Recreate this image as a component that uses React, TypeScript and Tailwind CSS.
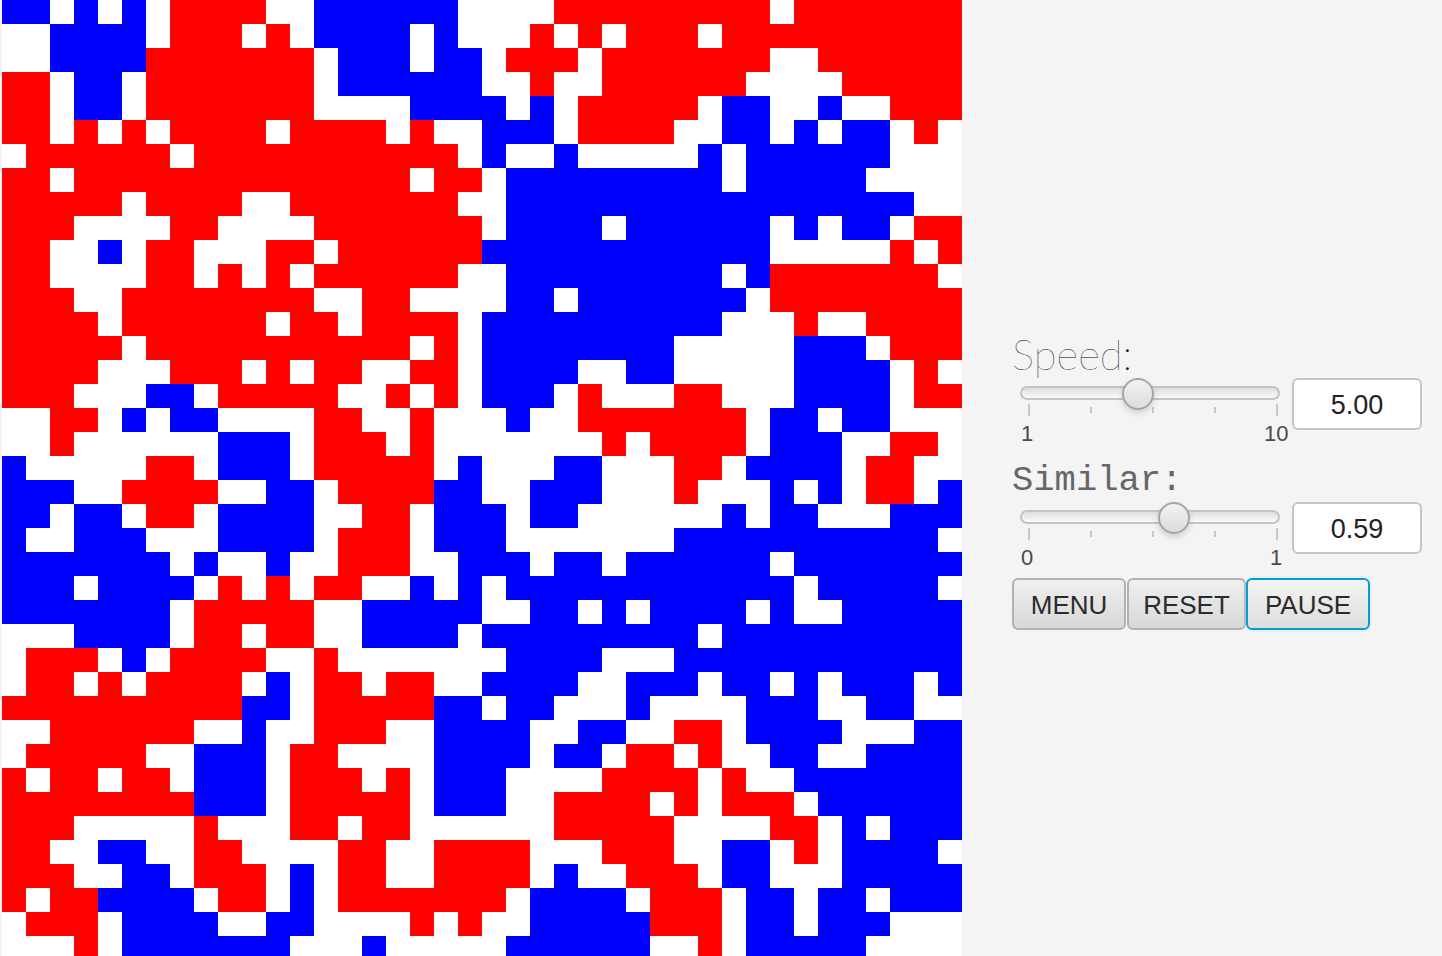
const ROWS = [
  "BB.B.B.RRRR..BBBBBB....RRRRRRRRR.RRRRRRR",
  "..BBBB.RRR.R.BBBB.B...R.R.RRR.RRRRRRRRRR",
  "..BBBBRRRRRRR.BBB.BB.RRR.RRRRRRR..RRRRRR",
  "RR.BB.RRRRRRR.BBBBBB..R..RRRRRR....RRRRR",
  "RR.BB.RRRRRRR....BBBB.B.RRRRR.BB..B..RRR",
  "RR.R.R.RRRR.RRRR.R..BBB.RRRR..BB.B.BB.R.",
  ".RRRRRR.RRRRRRRRRRR.B..B.....B.BBBBBB...",
  "RR.RRRRRRRRRRRRRR.RR.BBBBBBBBB.BBBBB....",
  "RRRRR.RRRR..RRRRRRR..BBBBBBBBBBBBBBBBB..",
  "RRR....RR....RRRRRRR.BBBB.BBBBBB.B.BB.RR",
  "RR..B.RR...RR.RRRRRRBBBBBBBBBBBB.....R.R",
  "RR....RR.R.R.RRRRRR..BBBBBBBBB.BRRRRRRR.",
  "RRR..RRRRRRRR..RR....BB.BBBBBBB.RRRRRRRR",
  "RRRR.RRRRRR.RR.RRRR.BBBBBBBBBB...R..RRRR",
  "RRRRR.RRRRRRRRRRR.R.BBBBBBBB.....BBB.RRR",
  "RRRR...RRR.R.RR..RR.BBBB..BB.....BBBB.R.",
  "RRR...BB.RRRRR..R.R.BBB.R...RR...BBBB.RR",
  "..RR.B.BB....RR..R...B..RRRRRRR.BB.BB...",
  "..R......BBB.RRR.R.......R.RRRR.BBB..RR.",
  "B.....RR.BBB.RRRRR.B...BB...RR.BBBB.RR..",
  "BBB..RRRR..BB.RRRRBB..BBB...R...B.B.RR.B",
  "BB.BB.RR.BBBB..RR.BBB.BB......B.BB...BBB",
  "B..BBB...BBBB.RRR.BBB.......BBBBBBBBBBB.",
  "BBBBBBB.B..B..RRR..BBB.BB.BBBBBB.BBBBBBB",
  "BBB.BBBB.R.R.RR..B.B.BBBBBBBBBBBB.BBBBB.",
  "BBBBBBB.RRRRR..BBBBB..BB.B.BBBB.B..BBBBB",
  "...BBBB.RR.RR..BBBB.BBBBBBBBB.BBBBBBBBBB",
  ".RRR.B.RRRR..R.......BBBB...BBBBBBBBBBBB",
  ".RR.R.RRRR.B.RR.RR..BBBB..BBB.BB.B.BBB.B",
  "RRRRRRRRRRBB.RRRRRBB.BB...B....BBB..BB..",
  "..RRRRRR..B..RRR..BBBB..BB..RR.BBBB...BB",
  ".RRRRR..BBB.RR....BBBB.BB.RR.R..BB..BBBB",
  "R.RR.RR.BBB.RRR.R.BBB....RRRR.R..BBBBBBB",
  "RRRRRRRRBBB.RRRRR.BBB..RRRR.R.RRR.BBBBBB",
  "RRR.....R...RR.RR......RRRRR....RR.B.BBB",
  "RR..BB..RR....RR..RRRR...RRR..BB.R.BBBB.",
  "RRR..BB.RRR.B.RR..RRRR.B..RRR.BB...BBBBB",
  "R.RRBBBB.RR.B.RRRRRRR.BBBB.RRR.BB.BB.BBB",
  ".RRR.BBBB..BB....R.R..BBBBBRRR.BB.BBB...",
  "...R.BBBBBBB...B.....BBBBBB..R.BBBBB....",
];

const CELL: Record<string, string> = {
  R: "bg-[#ff0000]",
  B: "bg-[#0000ff]",
  ".": "bg-white",
};

function Slider({ thumb, min, max }: { thumb: string; min: string; max: string }) {
  return (
    <div className="w-[280px] pt-2">
      <div className="relative ml-2 w-[260px]">
        <div className="h-[14px] rounded-full border-2 border-[#c4c4c4] bg-gradient-to-b from-[#dedede] to-[#fbfbfb]" />
        <div
          className={`absolute -top-2 h-8 w-8 rounded-full border-2 border-[#a6a6a6] bg-gradient-to-b from-[#f2f2f2] to-[#dcdcdc] shadow-[0_3px_6px_rgba(0,0,0,0.15)] ${thumb}`}
        />
      </div>
      <div className="mt-1 ml-2 flex h-3 w-[260px] items-center justify-between pr-[2px] pl-2">
        <span className="h-3 w-[2px] bg-[#c8c8c8]" />
        <span className="h-[6px] w-[2px] bg-[#c8c8c8]" />
        <span className="h-[6px] w-[2px] bg-[#c8c8c8]" />
        <span className="h-[6px] w-[2px] bg-[#c8c8c8]" />
        <span className="h-3 w-[2px] bg-[#c8c8c8]" />
      </div>
      <div className="mt-[7px] flex justify-between pr-1 pl-[3px] text-[22px] leading-[22px] text-[#4a4a4a]">
        <span className="w-6 text-center">{min}</span>
        <span className="w-6 text-center">{max}</span>
      </div>
    </div>
  );
}

function ValueBox({ value }: { value: string }) {
  return (
    <div className="flex h-[52px] w-[130px] items-center justify-center rounded-md border-2 border-[#c6c6c6] bg-white pt-[2px] text-[27px] text-[#222]">
      {value}
    </div>
  );
}

export default function App() {
  return (
    <div className="flex h-[956px] overflow-hidden bg-[#f4f4f4] pl-[2px] font-['Liberation_Sans',sans-serif]">
      <div className="grid h-[956px] w-[960px] shrink-0 grid-cols-[repeat(40,24px)] auto-rows-[24px] overflow-hidden">
        {ROWS.flatMap((row, y) =>
          row.split("").map((c, x) => <div key={`${y}-${x}`} className={CELL[c]} />),
        )}
      </div>

      <div className="pt-[334px] pl-[50px]">
        <div className="h-[44px] font-['Lato',sans-serif] text-[42px] leading-[40px] font-thin text-black">
          Speed:
        </div>
        <div className="flex h-[80px] items-start">
          <Slider thumb="left-[102px]" min="1" max="10" />
          <ValueBox value="5.00" />
        </div>

        <div className="h-[44px] font-['Liberation_Mono',monospace] text-[35.5px] leading-[46px] text-[#666]">
          Similar:
        </div>
        <div className="flex h-[76px] items-start">
          <Slider thumb="left-[138px]" min="0" max="1" />
          <ValueBox value="0.59" />
        </div>

        <div className="flex items-start text-[26px] text-[#2b2b2b]">
          <button className="h-[52px] w-[114px] rounded-md border-2 border-[#b2b2b2] bg-gradient-to-b from-[#f0f0f0] to-[#d8d8d8] pt-[2px]">
            MENU
          </button>
          <button className="ml-px h-[52px] w-[119px] rounded-md border-2 border-[#b2b2b2] bg-gradient-to-b from-[#f0f0f0] to-[#d8d8d8] pt-[2px]">
            RESET
          </button>
          <button className="h-[52px] w-[124px] rounded-md border-2 border-[#039ed3] bg-gradient-to-b from-[#f4f4f4] to-[#dedede] pt-[2px] shadow-[0_0_3px_#bfe6f4]">
            PAUSE
          </button>
        </div>
      </div>
    </div>
  );
}
